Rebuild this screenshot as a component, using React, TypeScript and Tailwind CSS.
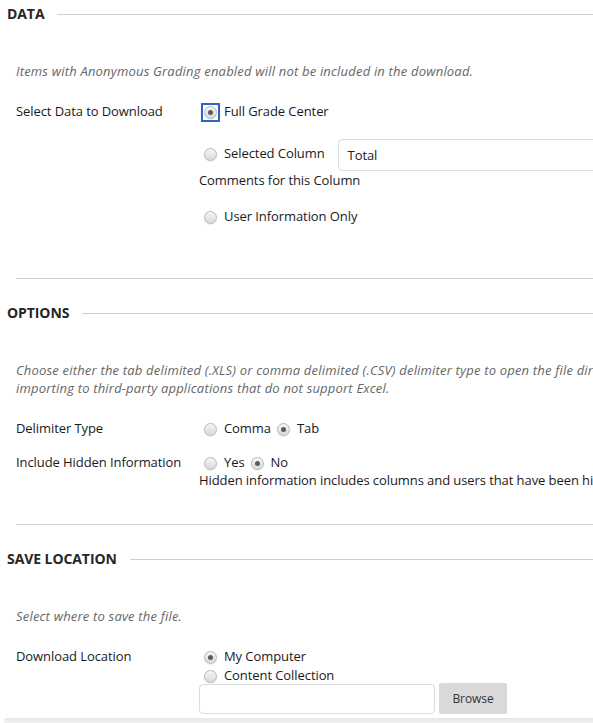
import React from "react";

function Radio({ checked = false, focused = false }: { checked?: boolean; focused?: boolean }) {
  const circle = (
    <span className="flex h-[13px] w-[13px] items-center justify-center rounded-full border border-[#b8b8b8] bg-gradient-to-b from-[#f6f6f6] to-[#d9d9d9] shadow-[0_1px_1px_rgba(0,0,0,0.08)]">
      {checked && <span className="h-[5px] w-[5px] rounded-full bg-[#5a5a5a]" />}
    </span>
  );
  return (
    <span className="ml-[5px] mr-[7px] mt-[4px] flex h-[13px] w-[13px] shrink-0">
      {focused ? (
        <span className="flex h-[13px] w-[13px] outline-2 outline-offset-[1px] outline-[#2d64c8]">{circle}</span>
      ) : (
        circle
      )}
    </span>
  );
}

function Heading({ title }: { title: string }) {
  return (
    <div className="flex h-[28px] items-center pl-[7px]">
      <span className="text-[14px] font-bold text-[#262626]">{title}</span>
      <span className="ml-[13px] h-px flex-1 bg-[#cfcfcf]" />
    </div>
  );
}

function Help({ children }: { children: React.ReactNode }) {
  return (
    <div className="pl-[16px] text-[13px] italic leading-[18px] tracking-[0.19px] text-[#666] whitespace-nowrap">
      {children}
    </div>
  );
}

function Sep() {
  return <div className="ml-[16px] h-px bg-[#cfcfcf]" />;
}

export default function App() {
  return (
    <div
      className="relative h-[723px] w-[593px] overflow-hidden bg-white text-[13px] leading-[18px] tracking-[-0.08px] text-[#1a1a1a]"
      style={{ fontFamily: '"Open Sans", "Liberation Sans", sans-serif' }}
    >
      <div className="w-[900px]">
        {/* DATA */}
        <Heading title="DATA" />
        <div className="mt-[34px]">
          <Help>Items with Anonymous Grading enabled will not be included in the download.</Help>
        </div>
        <div className="mt-[22px] flex">
          <div className="w-[199px] shrink-0 pl-[16px]">Select Data to Download</div>
          <div className="flex flex-col">
            <div className="flex">
              <Radio checked focused />
              <span>Full Grade Center</span>
            </div>
            <div className="flex items-start">
              <div className="mt-[24px] flex">
                <Radio />
                <span>Selected Column</span>
              </div>
              <div className="ml-[13px] mt-[19px] flex h-[32px] w-[400px] items-center rounded-[4px] border border-[#dcdcdc] pl-[9px] text-[#222]">
                Total
              </div>
            </div>
            <div>Comments for this Column</div>
            <div className="mt-[18px] flex">
              <Radio />
              <span>User Information Only</span>
            </div>
          </div>
        </div>
        <div className="mt-[53px]">
          <Sep />
        </div>

        {/* OPTIONS */}
        <div className="mt-[20px]">
          <Heading title="OPTIONS" />
        </div>
        <div className="mt-[34px]">
          <Help>
            Choose either the tab delimited (.XLS) or comma delimited (.CSV) delimiter type to open the file directly in Excel. Use the comma delimited type when
            <br />
            importing to third-party applications that do not support Excel.
          </Help>
        </div>
        <div className="mt-[22px] flex">
          <div className="w-[199px] shrink-0 pl-[16px]">Delimiter Type</div>
          <div className="flex">
            <Radio />
            <span>Comma</span>
            <span className="w-[1px]" />
            <Radio checked />
            <span>Tab</span>
          </div>
        </div>
        <div className="mt-[16px] flex">
          <div className="w-[199px] shrink-0 pl-[16px]">Include Hidden Information</div>
          <div className="flex flex-col">
            <div className="flex">
              <Radio />
              <span>Yes</span>
              <span className="w-[1px]" />
              <Radio checked />
              <span>No</span>
            </div>
            <div className="whitespace-nowrap">
              Hidden information includes columns and users that have been hidden from the Grade Center view.
            </div>
          </div>
        </div>
        <div className="mt-[35px]">
          <Sep />
        </div>

        {/* SAVE LOCATION */}
        <div className="mt-[20px]">
          <Heading title="SAVE LOCATION" />
        </div>
        <div className="mt-[34px]">
          <Help>Select where to save the file.</Help>
        </div>
        <div className="mt-[22px] flex">
          <div className="w-[199px] shrink-0 pl-[16px]">Download Location</div>
          <div className="flex flex-col">
            <div className="flex leading-[19px]">
              <Radio checked />
              <span>My Computer</span>
            </div>
            <div className="flex leading-[19px]">
              <Radio />
              <span>Content Collection</span>
            </div>
            <div className="-mt-[2px] flex items-start">
              <div className="mt-px h-[30px] w-[236px] rounded-[4px] border border-[#dcdcdc]" />
              <button className="ml-[4px] flex h-[31px] w-[68px] items-center justify-center rounded-[2px] bg-[#d9d9d9] text-[12px] text-[#333]">
                Browse
              </button>
            </div>
          </div>
        </div>
      </div>
      <div className="absolute bottom-0 left-[4px] right-0 h-[5px] rounded-tl-[3px] bg-gradient-to-b from-[#e6e6e6] to-[#f3f3f3]" />
    </div>
  );
}
